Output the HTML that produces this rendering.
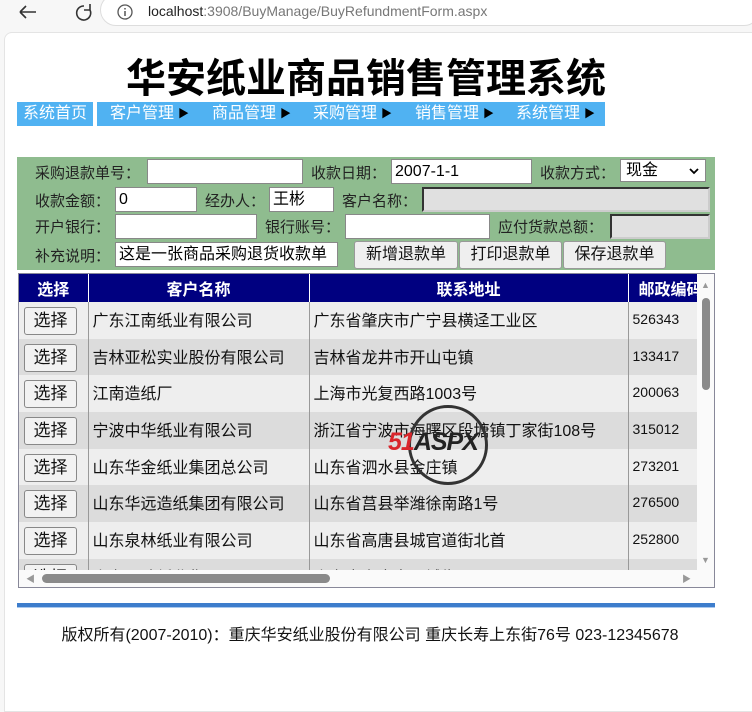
<!DOCTYPE html>
<html><head><meta charset="utf-8"><style>
*{margin:0;padding:0;box-sizing:border-box}
body{width:752px;height:692px;overflow:hidden;background:#f7f7f7;font-family:"Liberation Sans","Noto Sans CJK SC",sans-serif;position:relative}
.a{position:absolute}
.page{left:4px;top:32px;width:760px;height:680px;background:#fff;border-top-left-radius:8px;border:1px solid #e4e4e4}
.t{font-size:15px;color:#222;white-space:nowrap}
.in{position:absolute;background:#fff;border:1px solid #888;height:25px;font-size:16px;padding-left:3px;line-height:23px;white-space:nowrap;overflow:hidden;color:#000}
.dis{background:#e0e0e0;border:2px solid #333;border-right-color:#ccc;border-bottom-color:#ccc}
.btn{position:absolute;top:241px;height:28px;background:#efefef;border:1px solid #999;border-radius:3px;font-size:16px;line-height:26px;text-align:center;color:#111}
.menu{font-size:16px;color:#fff;top:102px;height:24px;line-height:24px;background:#50b2f2}
.menu i{font-style:normal;font-size:11px;color:#000;margin-left:4px;position:relative;top:-1px}
table{border-collapse:collapse;position:absolute;left:0;top:0;width:720px;table-layout:fixed}
td,th{font-size:16px;white-space:nowrap;overflow:hidden;border-right:1px solid #999;padding-left:4px;height:36.7px;color:#111;padding-bottom:3px}
th{background:#000080;color:#fff;height:28px;text-align:center;border-right:1px solid #fff;font-weight:bold;padding:0}
tr.o td{background:#eeeeee}tr.e td{background:#dcdcdc}
td.p{font-size:14px}
.sb{display:inline-block;width:53px;height:28px;background:#f2f2f2;border:1px solid #888;border-radius:3px;text-align:center;line-height:26px;font-size:17px;margin-left:1px;position:relative;top:2px}
</style></head><body>
<div class="a" style="left:0;top:0;width:752px;height:32px;background:#f7f7f7"></div>
<svg class="a" style="left:16px;top:2px" width="80" height="20"><path d="M4 10h16M4 10l6-6M4 10l6 6" stroke="#333" stroke-width="1.6" fill="none"/><path d="M68 4a7 7 0 1 0 6 4M74 2v6h-6" stroke="#333" stroke-width="1.6" fill="none"/></svg>
<div class="a" style="left:100px;top:-6px;width:660px;height:32px;border:1px solid #ddd;border-radius:16px;background:#fff"></div>
<svg class="a" style="left:117px;top:4px" width="16" height="16"><circle cx="8" cy="8" r="7" stroke="#555" stroke-width="1.3" fill="none"/><path d="M8 7v5M8 4v1.5" stroke="#555" stroke-width="1.5"/></svg>
<div class="a" style="left:148px;top:3px;font-size:14px;color:#222">localhost<span style="color:#777">:3908/BuyManage/BuyRefundmentForm.aspx</span></div>
<div class="a page"></div>
<div class="a" style="left:126px;top:46px;font-size:40px;font-weight:bold;color:#000;white-space:nowrap">华安纸业商品销售管理系统</div>
<div class="a menu" style="left:17px;width:76px;text-align:center">系统首页</div>
<div class="a menu" style="left:97px;width:508px"><span style="position:absolute;left:13px">客户管理<i>▶</i></span><span style="position:absolute;left:115px">商品管理<i>▶</i></span><span style="position:absolute;left:216px">采购管理<i>▶</i></span><span style="position:absolute;left:318px">销售管理<i>▶</i></span><span style="position:absolute;left:419px">系统管理<i>▶</i></span></div>
<div class="a" style="left:17px;top:157px;width:698px;height:113px;background:#8fbc8f"></div>
<div class="a t" style="left:35px;top:162px">采购退款单号：</div>
<div class="in" style="left:147px;top:159px;width:156px"></div>
<div class="a t" style="left:311px;top:162px">收款日期：</div>
<div class="in" style="left:391px;top:159px;width:141px">2007-1-1</div>
<div class="a t" style="left:540px;top:162px">收款方式：</div>
<div class="in" style="left:620px;top:159px;width:86px;height:23px;line-height:21px;padding-left:5px">现金<svg style="position:absolute;right:6px;top:7px" width="10" height="8"><path d="M1 2l4 4 4-4" stroke="#000" stroke-width="1.8" fill="none"/></svg></div>
<div class="a t" style="left:35px;top:190px">收款金额：</div>
<div class="in" style="left:115px;top:187px;width:82px">0</div>
<div class="a t" style="left:205px;top:190px">经办人：</div>
<div class="in" style="left:269px;top:187px;width:65px">王彬</div>
<div class="a t" style="left:342px;top:190px">客户名称：</div>
<div class="in dis" style="left:422px;top:187px;width:288px"></div>
<div class="a t" style="left:35px;top:216px">开户银行：</div>
<div class="in" style="left:115px;top:214px;width:142px"></div>
<div class="a t" style="left:265px;top:216px">银行账号：</div>
<div class="in" style="left:345px;top:214px;width:145px"></div>
<div class="a t" style="left:498px;top:216px">应付货款总额：</div>
<div class="in dis" style="left:610px;top:214px;width:100px"></div>
<div class="a t" style="left:35px;top:245px">补充说明：</div>
<div class="in" style="left:115px;top:242px;width:223px">这是一张商品采购退货收款单</div>
<div class="btn" style="left:354px;width:104px">新增退款单</div>
<div class="btn" style="left:459px;width:103px">打印退款单</div>
<div class="btn" style="left:563px;width:103px">保存退款单</div>
<div class="a" style="left:18px;top:273px;width:697px;height:315px;border:1px solid #889;background:#fff"></div>
<div class="a" style="left:19px;top:274px;width:678px;height:296px;overflow:hidden">
<table><colgroup><col style="width:69px"><col style="width:221px"><col style="width:319px"><col style="width:111px"></colgroup>
<tr><th>选择</th><th>客户名称</th><th>联系地址</th><th style="text-align:left;padding-left:10px">邮政编码</th></tr>
<tr class="o"><td><span class="sb">选择</span></td><td>广东江南纸业有限公司</td><td>广东省肇庆市广宁县横迳工业区</td><td class="p">526343</td></tr>
<tr class="e"><td><span class="sb">选择</span></td><td>吉林亚松实业股份有限公司</td><td>吉林省龙井市开山屯镇</td><td class="p">133417</td></tr>
<tr class="o"><td><span class="sb">选择</span></td><td>江南造纸厂</td><td>上海市光复西路1003号</td><td class="p">200063</td></tr>
<tr class="e"><td><span class="sb">选择</span></td><td>宁波中华纸业有限公司</td><td>浙江省宁波市海曙区段塘镇丁家街108号</td><td class="p">315012</td></tr>
<tr class="o"><td><span class="sb">选择</span></td><td>山东华金纸业集团总公司</td><td>山东省泗水县金庄镇</td><td class="p">273201</td></tr>
<tr class="e"><td><span class="sb">选择</span></td><td>山东华远造纸集团有限公司</td><td>山东省莒县举潍徐南路1号</td><td class="p">276500</td></tr>
<tr class="o"><td><span class="sb">选择</span></td><td>山东泉林纸业有限公司</td><td>山东省高唐县城官道街北首</td><td class="p">252800</td></tr>
<tr class="e"><td><span class="sb">选择</span></td><td>山东晨鸣纸业集团</td><td>山东省寿光市圣城街595号</td><td class="p">262700</td></tr>
</table></div>
<div class="a" style="left:697px;top:274px;width:17px;height:296px;background:#fafafa"></div>
<div class="a" style="left:702px;top:298px;width:8px;height:92px;background:#8a8a8a;border-radius:4px"></div>
<div class="a" style="left:701px;top:280px;font-size:9px;color:#999">▲</div>
<div class="a" style="left:701px;top:555px;font-size:9px;color:#999">▼</div>
<div class="a" style="left:19px;top:570px;width:695px;height:17px;background:#fafafa"></div>
<div class="a" style="left:42px;top:574px;width:288px;height:9px;background:#8a8a8a;border-radius:5px"></div>
<div class="a" style="left:26px;top:572px;font-size:9px;color:#999">◀</div>
<div class="a" style="left:682px;top:572px;font-size:9px;color:#999">▶</div>
<div class="a" style="left:408px;top:405px;width:80px;height:80px;border:3px solid #333;border-radius:50%"></div>
<div class="a" style="left:388px;top:428px;font-size:25px;font-weight:bold;font-style:italic;color:#d9262c;letter-spacing:-1px">51<span style="color:#222">ASPX</span></div>
<div class="a" style="left:17px;top:603px;width:698px;height:5px;background:#3d7dcc;border-bottom:1px solid #a9c8ee"></div>
<div class="a" style="left:0;top:621px;width:740px;text-align:center;font-size:16px;color:#111">版权所有(2007-2010)：重庆华安纸业股份有限公司 重庆长寿上东街76号 023-12345678</div>
</body></html>
